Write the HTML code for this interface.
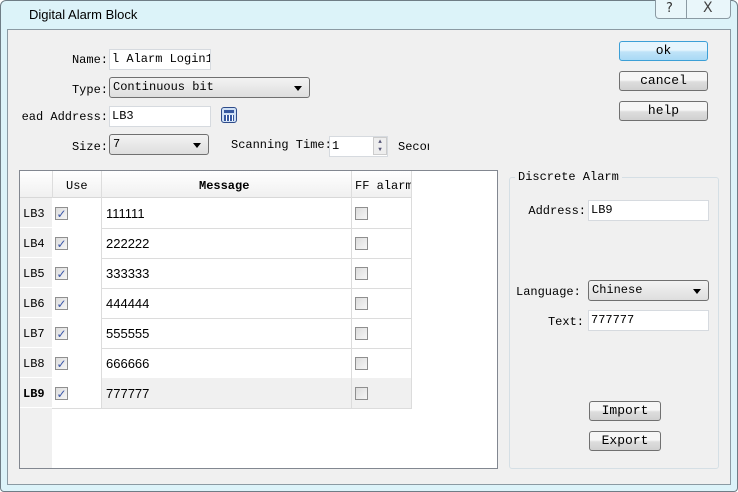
<!DOCTYPE html>
<html><head><style>
*{box-sizing:border-box;margin:0;padding:0}
body{width:738px;height:492px;background:#fff;position:relative;overflow:hidden;font-family:"Liberation Mono","Noto Sans CJK SC",monospace;font-size:12px;color:#000}
.a{position:absolute}
.frame{left:0;top:0;width:738px;height:492px;background:#dcf3f9;border:1px solid #6f7d86;border-radius:6px 6px 4px 4px}
.client{left:7px;top:29px;width:724px;height:456px;background:#f0f0f0;border:1px solid #8b9aa3}
.in{background:#fff;border:1px solid #d6dadf;height:21px;padding:2px 2px;white-space:nowrap;overflow:hidden}
.combo{border:1px solid #707070;border-radius:3px;background:linear-gradient(#f3f3f3,#dedede);height:21px;padding:2px 3px}
.combo:after{content:"";position:absolute;right:7px;top:8px;border:4px solid transparent;border-top:5px solid #000;border-bottom:0}
.btn{border:1px solid #707070;border-radius:3px;background:linear-gradient(#f6f6f6 45%,#dddddd 55%,#d0d0d0);text-align:center;height:20px;line-height:17px;font-size:13px}
.lbl{text-align:right;white-space:nowrap}
.cb{width:13px;height:13px;border:1px solid #8f8f8f;background:linear-gradient(135deg,#dcdcdc,#f6f6f6)}
.ck{color:#3b56a8;font-size:12px;line-height:12px;text-align:center;font-family:"DejaVu Sans",sans-serif;font-weight:bold}
.num{font-family:"Liberation Sans",sans-serif;font-size:13px}
</style></head><body>
<div class="a frame"></div>
<div class="a" style="left:29px;top:7px;font-family:'Liberation Sans',sans-serif;font-size:13px">Digital Alarm Block</div>
<div class="a" style="left:655px;top:0;width:76px;height:19px;border:1px solid #8b9aa3;border-top:0;border-radius:0 0 4px 4px;background:#e9f6fa"></div>
<div class="a" style="left:686px;top:0;width:1px;height:19px;background:#8b9aa3"></div>
<div class="a" style="left:666px;top:1px;font-size:13px;color:#333;font-family:'DejaVu Sans',sans-serif">?</div>
<div class="a" style="left:703px;top:0px;font-size:14px;color:#444;font-family:'DejaVu Sans',sans-serif">X</div>
<div class="a client"></div>

<div class="a lbl" style="left:40px;top:53px;width:68px">Name:</div>
<div class="a in" style="left:109px;top:49px;width:102px">l Alarm Login1</div>
<div class="a lbl" style="left:40px;top:83px;width:68px">Type:</div>
<div class="a combo" style="left:109px;top:77px;width:201px">Continuous bit</div>
<div class="a lbl" style="left:20px;top:110px;width:88px">ead Address:</div>
<div class="a in" style="left:109px;top:106px;width:102px">LB3</div>
<div class="a" style="left:221px;top:107px;width:16px;height:16px;border:1px solid #2e4b8a;border-radius:3px;background:#cfe0f5"><div style="margin:2px;height:3px;background:#3658a0"></div><div style="margin:1px 2px;height:6px;background:repeating-linear-gradient(90deg,#3658a0 0 2px,#fff 2px 3px)"></div></div>
<div class="a lbl" style="left:40px;top:140px;width:68px">Size:</div>
<div class="a combo" style="left:109px;top:134px;width:100px">7</div>
<div class="a" style="left:231px;top:138px">Scanning Time:</div>
<div class="a in" style="left:329px;top:136px;width:59px">1</div>
<div class="a" style="left:373px;top:137px;width:14px;height:18px;border:1px solid #ccc;background:#eee;font-size:6px;line-height:8px;text-align:center;color:#557">▲<br>▼</div>
<div class="a" style="left:398px;top:140px;width:31px;overflow:hidden">Second</div>

<div class="a btn" style="left:619px;top:41px;width:89px;border-color:#3c9fd6;background:linear-gradient(#e6f5fd 45%,#bfe3f8 55%,#a9d9f5)">ok</div>
<div class="a btn" style="left:619px;top:71px;width:89px">cancel</div>
<div class="a btn" style="left:619px;top:101px;width:89px">help</div>

<div class="a" style="left:19px;top:170px;width:479px;height:299px;background:#fff;border:1px solid #828790"></div>
<div class="a" style="left:20px;top:171px;width:32px;height:297px;background:#f0f0f0"></div>
<div class="a" style="left:20px;top:171px;width:392px;height:27px;background:linear-gradient(#fff,#f0f0f0);border-bottom:1px solid #d8d8d8"></div>
<div class="a" style="left:52px;top:171px;width:1px;height:27px;background:#ddd"></div>
<div class="a" style="left:101px;top:171px;width:1px;height:27px;background:#ddd"></div>
<div class="a" style="left:351px;top:171px;width:1px;height:27px;background:#ddd"></div>
<div class="a" style="left:411px;top:171px;width:1px;height:27px;background:#ddd"></div>
<div class="a" style="left:66px;top:179px">Use</div>
<div class="a" style="left:199px;top:179px;font-weight:bold">Message</div>
<div class="a" style="left:355px;top:179px;width:56px;overflow:hidden;white-space:nowrap">FF alarm</div>
<div id="rows"></div>
<script>
var h='';for(var i=0;i<7;i++){var y=198+i*30;var last=i==6;
h+='<div class="a" style="left:52px;top:'+y+'px;width:360px;height:31px;border:1px solid #dcdcdc;border-top:0;'+(last?'background:#f0f0f0':'')+'"></div>';
h+='<div class="a" style="left:52px;top:'+y+'px;width:50px;height:30px;background:#fff;border-right:1px solid #dcdcdc"></div>';
h+='<div class="a" style="left:351px;top:'+y+'px;width:1px;height:30px;background:#dcdcdc"></div>';
h+='<div class="a" style="left:20px;top:'+(y+29)+'px;width:32px;height:1px;background:#fff"></div>';
h+='<div class="a" style="left:23px;top:'+(y+9)+'px;'+(last?'font-weight:bold':'')+'">LB'+(i+3)+'</div>';
h+='<div class="a cb ck" style="left:55px;top:'+(y+9)+'px">✓</div>';
h+='<div class="a cb" style="left:355px;top:'+(y+9)+'px"></div>';
h+='<div class="a num" style="left:106px;top:'+(y+8)+'px">'+String(i+1).repeat(6)+'</div>';}
document.getElementById('rows').innerHTML=h;
</script>

<div class="a" style="left:509px;top:177px;width:210px;height:292px;border:1px solid #d5dfe5;border-radius:3px"></div>
<div class="a" style="left:515px;top:170px;background:#f0f0f0;padding:0 3px">Discrete Alarm</div>
<div class="a lbl" style="left:520px;top:204px;width:66px">Address:</div>
<div class="a in" style="left:588px;top:200px;width:121px">LB9</div>
<div class="a" style="left:516px;top:285px">Language:</div>
<div class="a combo" style="left:588px;top:280px;width:121px">Chinese</div>
<div class="a lbl" style="left:520px;top:315px;width:64px">Text:</div>
<div class="a in" style="left:588px;top:310px;width:121px">777777</div>
<div class="a btn" style="left:589px;top:401px;width:72px">Import</div>
<div class="a btn" style="left:589px;top:431px;width:72px">Export</div>
</body></html>
